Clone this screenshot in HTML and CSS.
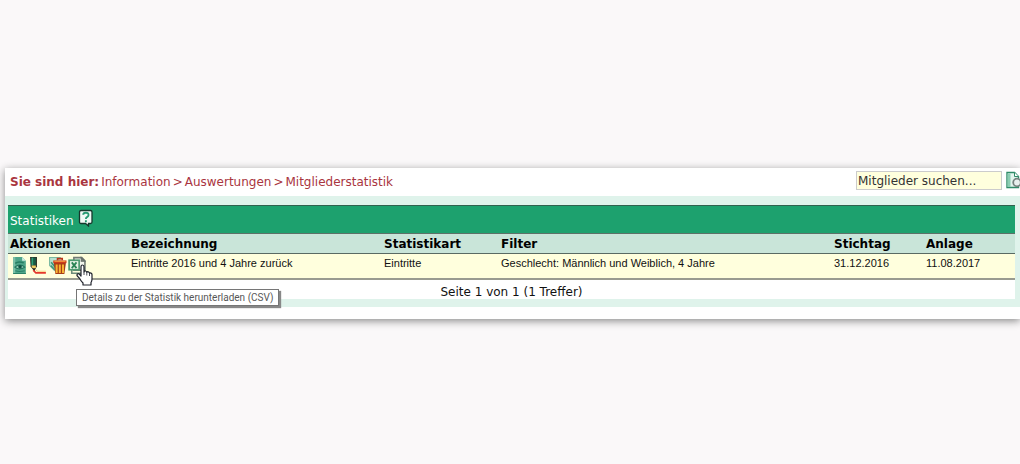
FILE: index.html
```html
<!DOCTYPE html>
<html lang="de">
<head>
<meta charset="utf-8">
<title>Mitgliederstatistik</title>
<link rel="stylesheet" href="styles.css">
</head>
<body>
<main class="panel">
  <header class="topbar">
    <nav class="crumbs" aria-label="Brotkrumen">
      <strong>Sie sind hier:</strong>
      <a href="#">Information</a>
      <span>&gt;</span>
      <a href="#">Auswertungen</a>
      <span>&gt;</span>
      <a href="#">Mitgliederstatistik</a>
    </nav>
    <form class="search">
      <input class="search-input" type="text" value="Mitglieder suchen..." aria-label="Mitglieder suchen">
      <button class="icon-button" type="button" aria-label="Suchen">
        <svg width="14" height="18" viewBox="0 0 14 18">
          <path d="M1 1.500h7.500l4 4v11H1z" fill="#e2f5ed" stroke="#2f8b68" stroke-width="1.400"/>
          <path d="M1.500 2.500v13.500h3V2.500z" fill="#8bcdb2"/>
          <path d="M8.500 1.500v4h4" fill="#fff" stroke="#2f8b68"/>
          <circle cx="11" cy="11.500" r="3.800" fill="#e9f0ee" stroke="#77837f" stroke-width="1.800"/>
        </svg>
      </button>
    </form>
  </header>
  <section class="content">
    <div class="list">
      <h1 class="title">Statistiken
        <button class="icon-button" type="button" aria-label="Hilfe">
          <svg width="16" height="18" viewBox="0 0 16 18">
            <path d="M3 1.500h9.500q1.500 0 1.500 1.500v10q0 1.500-1.500 1.500h-2v2.500l-3-2.500H3Q1.500 14.500 1.500 13V3Q1.500 1.500 3 1.500z" fill="#effaf5" stroke="#15382c" stroke-width="1.300"/>
            <path d="M5.200 5.800Q5.200 3.800 7.900 3.800t2.600 2.100q0 1.200-1.200 2-1.400.8-1.400 2M7.900 11.300v1.900" fill="none" stroke="#279a72" stroke-width="1.900"/>
          </svg>
        </button>
      </h1>
      <table class="stats">
        <thead>
          <tr>
            <th class="col-actions" scope="col">Aktionen</th>
            <th class="col-name" scope="col">Bezeichnung</th>
            <th class="col-kind" scope="col">Statistikart</th>
            <th scope="col">Filter</th>
            <th class="col-date" scope="col">Stichtag</th>
            <th class="col-created" scope="col">Anlage</th>
          </tr>
        </thead>
        <tbody>
          <tr>
            <td>
              <div class="actions">
                <button class="icon-button" type="button" aria-label="Anzeigen">
                  <svg width="19" height="19" viewBox="0 0 18 18">
                    <path d="M3 1h8.500L15 4.500V17H3z" fill="#4fa58a"/>
                    <path d="M3 1h2v16H3z" fill="#7dc0a8"/>
                    <path d="M11.500 1v3.500H15z" fill="#cdeee2"/>
                    <path d="M5 7q3-2.500 8-.5" fill="none" stroke="#267c63" stroke-width="1.500"/>
                    <path d="M4.500 10.500q5-4 9.500 0-5 3.500-9.500 0z" fill="#8fcab5" stroke="#1f735b"/>
                    <circle cx="9.500" cy="10.300" r="1.700" fill="#0f4f43"/>
                    <path d="M5 14q4 1.500 9 0M3 16.500h12" fill="none" stroke="#2c8167"/>
                  </svg>
                </button>
                <button class="icon-button" type="button" aria-label="Bearbeiten">
                  <svg width="19" height="19" viewBox="0 0 18 18">
                    <path d="M1 1h6.500v9L5 14.500 1.500 10z" fill="#2a2a20"/>
                    <path d="M2.300 1.500h2V9h-2z" fill="#2b9f78"/>
                    <path d="M4.300 1.500h2.200V9H4.300z" fill="#185a46"/>
                    <path d="M2.500 9h4v2L5 13 2.500 10.500z" fill="#f4cf65"/>
                    <path d="M3.500 11.500h2.500l-1 3z" fill="#222"/>
                    <path d="M4 13.500l2.500 2.500H16" fill="none" stroke="#e5382c" stroke-width="1.600"/>
                    <path d="M6.500 13l1.500 1.500h8" fill="none" stroke="#f6cf83"/>
                  </svg>
                </button>
                <button class="icon-button" type="button" aria-label="Löschen">
                  <svg width="19" height="19" viewBox="0 0 18 18">
                    <path d="M1 1h11v4L8 12H5L1 8z" fill="#b9e0d0"/>
                    <path d="M1 1.500h11M1.500 1v8l5 5" fill="none" stroke="#78b8a0"/>
                    <path d="M3 6l4 5M2.500 9l4 4" stroke="#3b977a" stroke-width="1.500"/>
                    <path d="M5.500 6.500h11.500L15.500 17H7z" fill="#a83c16"/>
                    <path d="M8.200 8v8M11.200 8v8M14.200 8v8" stroke="#f7b534" stroke-width="1.900"/>
                    <path d="M5 5.500h12.500" stroke="#ce3a1b" stroke-width="2.600"/>
                    <path d="M6 5h10.500" stroke="#f5a341"/>
                    <path d="M9 4V2.500h4.500V4" fill="none" stroke="#ba351b" stroke-width="1.500"/>
                  </svg>
                </button>
                <span class="hovered">
                  <button class="icon-button" type="button" aria-describedby="csv-tip" aria-label="CSV herunterladen">
                    <svg width="19" height="19" viewBox="-1 0 18 18">
                      <path d="M5.500 1.500h7.500l3 3v9h-10.500z" fill="#f3f6ed" stroke="#717b74" stroke-width="1.500"/>
                      <path d="M12.500 1.500v3.500h3.500z" fill="#788079" stroke="#666f69"/>
                      <path d="M3.500 13v3.300h9" fill="none" stroke="#6d8c7a" stroke-width="1.500"/>
                      <rect x="1" y="4" width="9.500" height="9" fill="#e3f1e3" stroke="#4d9a70" stroke-width="1.600"/>
                      <path d="M3.500 6l4.500 5.500M8 6l-4.500 5.500" stroke="#298354" stroke-width="1.700"/>
                    </svg>
                  </button>
                  <svg class="cursor" width="17" height="22" viewBox="0 0 17 22" aria-hidden="true">
                    <path d="M5 12V3Q5 1 6.500 1T8 3v5q.2-1.200 1.500-1t1.300 1.500q.4-1 1.500-.7t1.200 1.500q.5-.7 1.500-.2t1 1.400v4.500q0 2-1 3.500v2.500H7V19q-2-2-3.200-4.300L1.300 12q-.8-1.300.2-2t2 .3z" fill="#fff" stroke="#20232c" stroke-width="1.200" stroke-linejoin="round"/>
                    <path d="M8 8v3M10.800 9v2.500M13.500 10v2" stroke="#4b4e56"/>
                  </svg>
                  <span class="tooltip" id="csv-tip" role="tooltip">Details zu der Statistik herunterladen (CSV)</span>
                </span>
              </div>
            </td>
            <td>Eintritte 2016 und 4 Jahre zurück</td>
            <td>Eintritte</td>
            <td>Geschlecht: Männlich und Weiblich, 4 Jahre</td>
            <td>31.12.2016</td>
            <td>11.08.2017</td>
          </tr>
        </tbody>
      </table>
      <p class="pages">Seite 1 von 1 (1 Treffer)</p>
    </div>
  </section>
</main>
</body>
</html>
```
FILE: styles.css
```css
* {
  box-sizing: border-box;
}

body {
  min-height: 100vh;
  margin: 0;
  padding: 168px 0 0 5px;
  background: #faf8f9;
  color: #111;
  font: 12px/16px "DejaVu Sans", Verdana, sans-serif;
}

.panel {
  padding-bottom: 12px;
  background: #fff;
  box-shadow: 0 2px 8px #888;
}

.topbar {
  display: flex;
  justify-content: space-between;
  height: 28px;
  padding: 3px 0 0 5px;
}

.crumbs {
  display: flex;
  gap: 2px;
  padding-top: 3px;
  color: #a93540;
}

.crumbs a {
  color: inherit;
  text-decoration: none;
}

.search {
  display: flex;
  align-items: flex-start;
  gap: 4px;
}

.search-input {
  width: 146px;
  height: 19px;
  padding: 0 1px;
  border: 1px solid #ccc;
  background: #ffffdd;
  color: #333;
  font: inherit;
}

.icon-button {
  display: block;
  padding: 0;
  border: 0;
  background: none;
}

.icon-button svg {
  display: block;
}

.content {
  padding: 9px 5px 8px 3px;
  background: #dff3eb;
}

.list {
  background: #fff;
}

.title {
  display: flex;
  align-items: flex-start;
  gap: 4px;
  height: 29px;
  margin: 0;
  padding: 3px 2px 0;
  border-top: 1px solid #31614e;
  border-bottom: 1px solid #5c7168;
  background: #1da16e;
  color: #fff;
  font-size: 12px;
  font-weight: normal;
  line-height: 24px;
}

.stats {
  width: 100%;
  border-spacing: 0;
  table-layout: fixed;
}

.stats th,
.stats td {
  padding: 2px;
  text-align: left;
  vertical-align: top;
}

.stats th {
  height: 20px;
  padding: 2px 2px 1px;
  border-bottom: 1px solid #596a63;
  background: #c9e5d9;
  color: #000;
}

.stats td {
  height: 26px;
  border-bottom: 2px solid #999b90;
  background: #ffffdd;
  font: 11px/15px "Liberation Sans", Arial, sans-serif;
}

.col-actions {
  width: 121px;
}

.col-name {
  width: 253px;
}

.col-kind {
  width: 117px;
}

.col-date {
  width: 92px;
}

.col-created {
  width: 91px;
}

.actions {
  display: flex;
}

.hovered {
  position: relative;
}

.cursor {
  position: absolute;
  top: 8px;
  left: 9px;
}

.tooltip {
  position: absolute;
  top: 33px;
  left: 9px;
  padding: 0 5px;
  border: 1px solid #767676;
  background: #fff;
  box-shadow: 2px 2px 1px #888;
  color: #575757;
  font: 10px/15px Roboto, "Open Sans", sans-serif;
  white-space: nowrap;
}

.pages {
  margin: 0;
  padding: 5px 0 0;
  line-height: 14px;
  text-align: center;
}
```
